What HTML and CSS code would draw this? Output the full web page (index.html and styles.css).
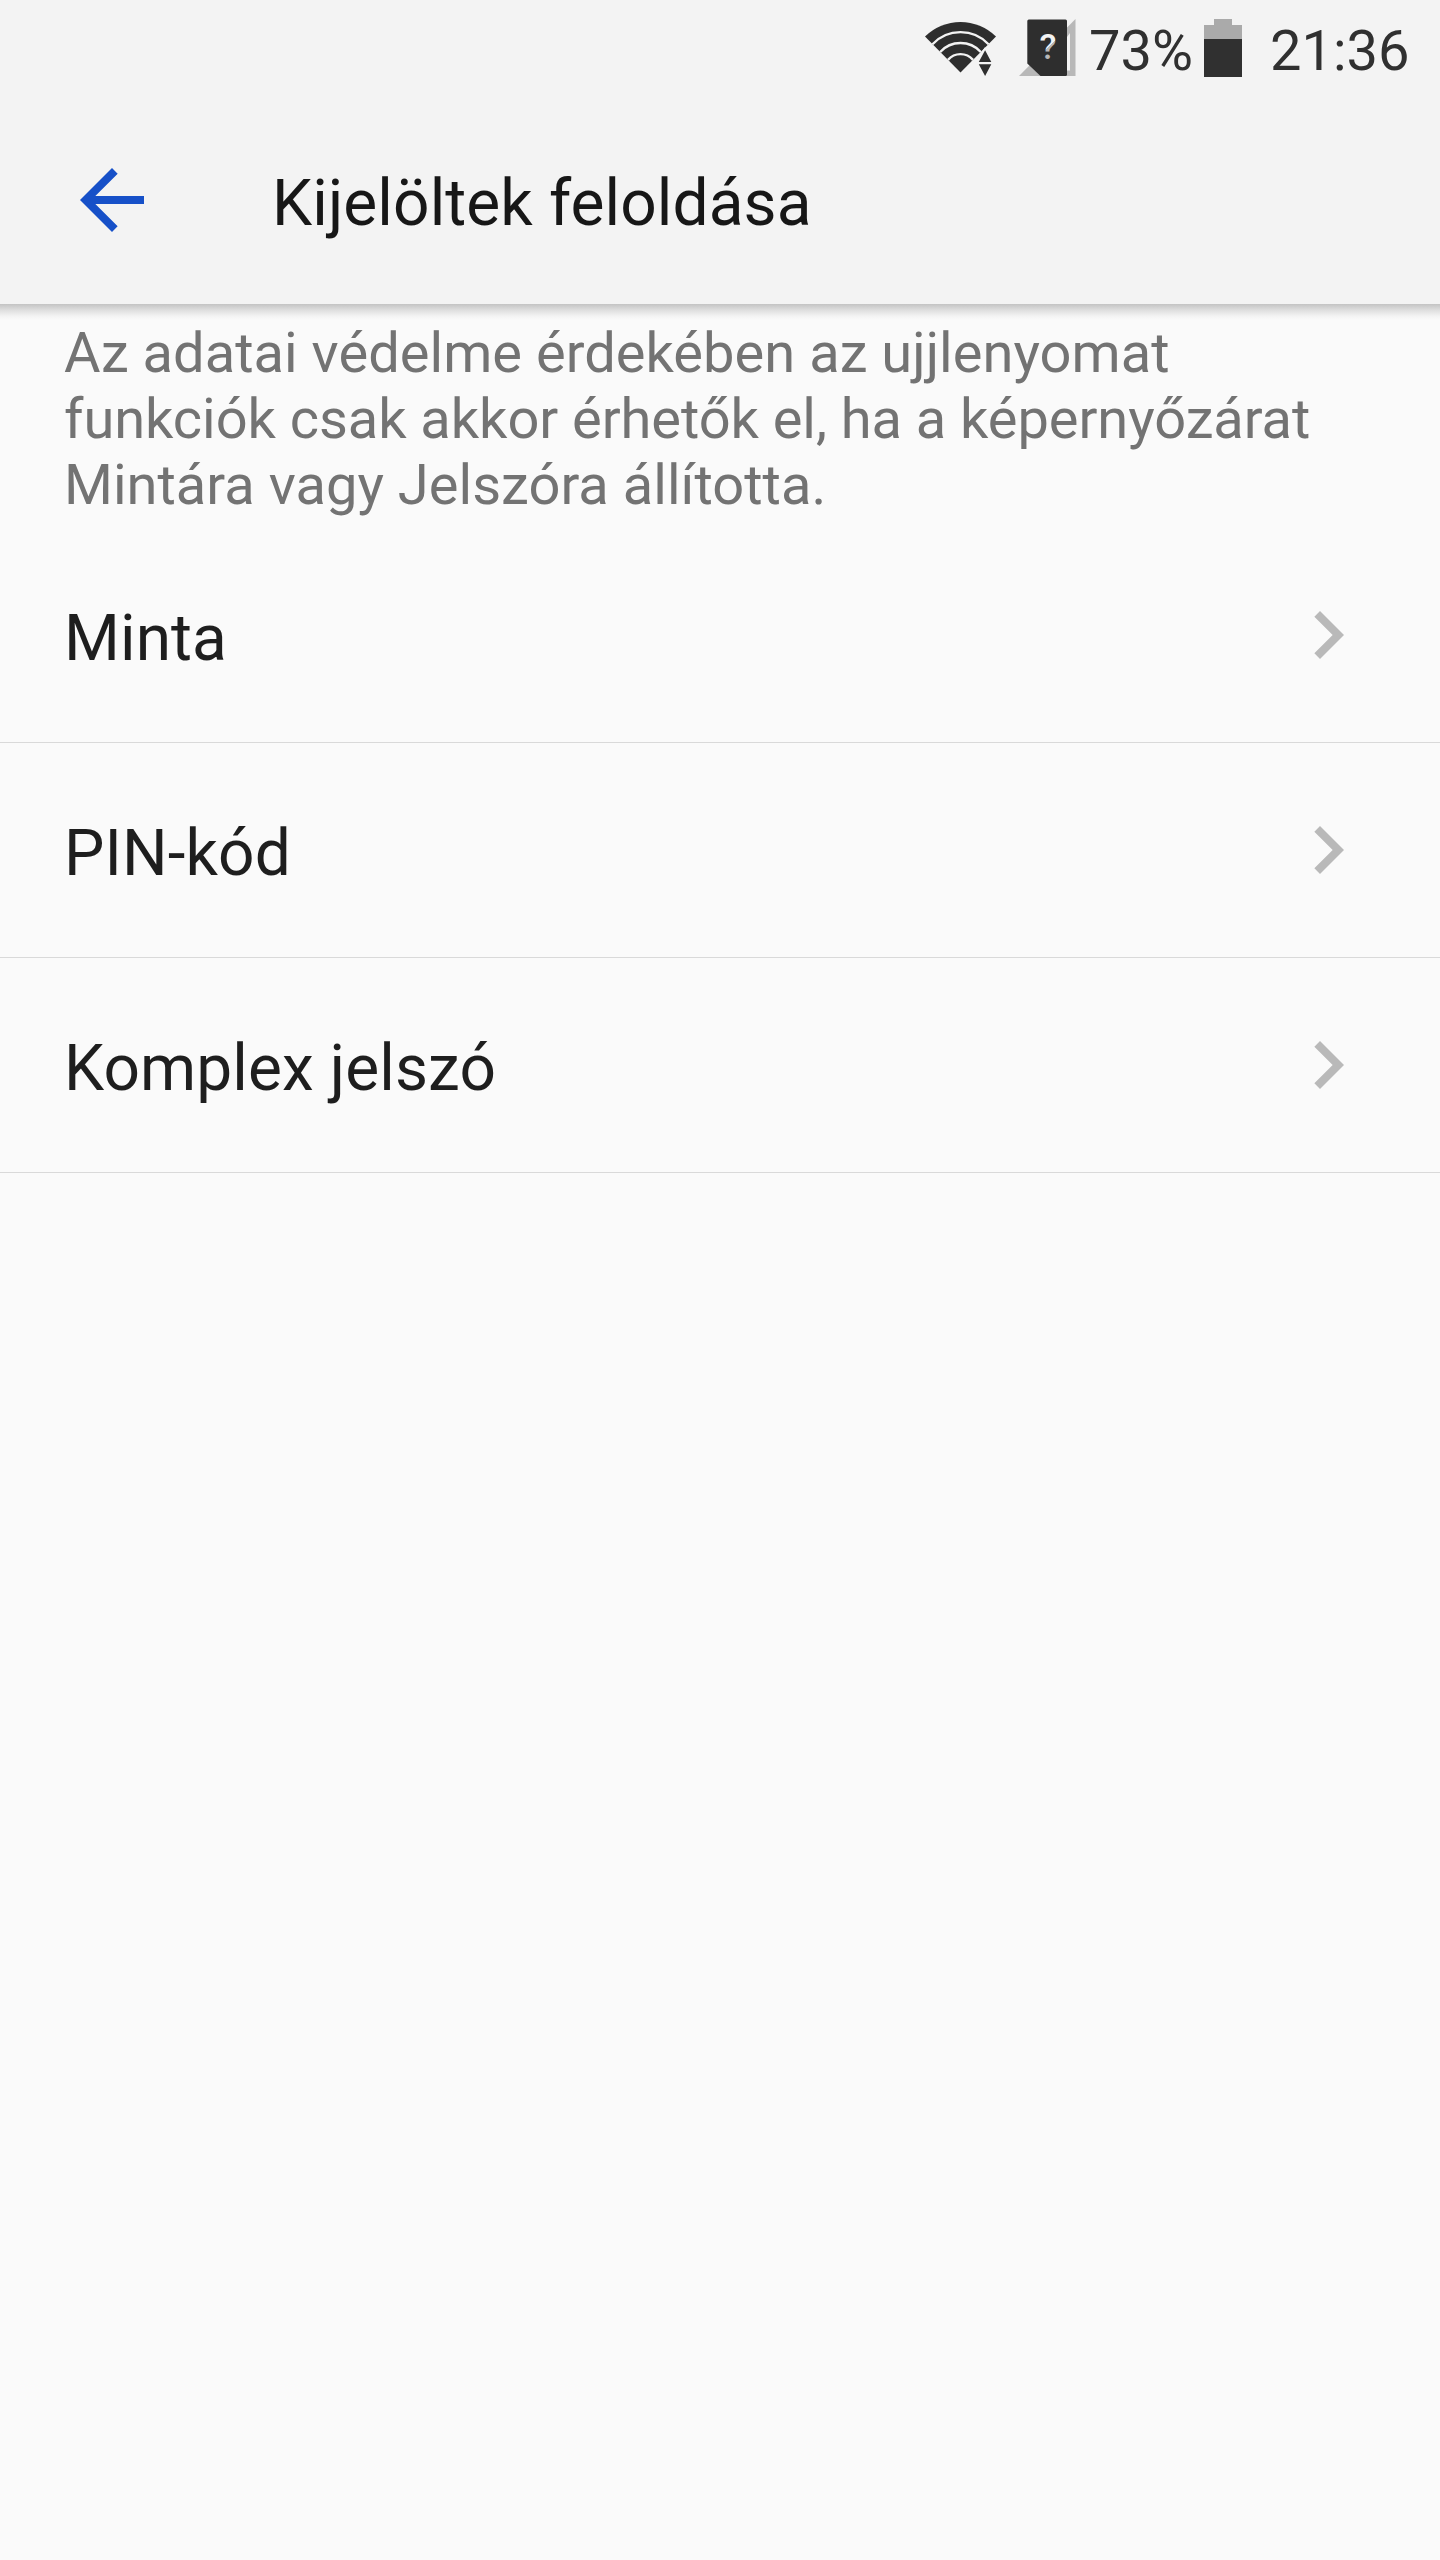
FILE: index.html
```html
<!DOCTYPE html>
<html lang="hu">
<head>
    <meta charset="UTF-8">
    <meta name="viewport" content="width=device-width, initial-scale=1.0">
    <title>Kijelöltek feloldása</title>
    <link rel="stylesheet" href="styles.css">
</head>
<body>
    <header class="header">
        <div class="status-bar">
            <svg class="icon-wifi" width="72" height="56" viewBox="0 0 72 56">
                <path d="M35.5 51.5L0 15.5A50.5 50.5 0 0 1 71 15.5Z" fill="#2e2e2e"/>
                <g fill="none" stroke="#f3f3f3" stroke-width="2.4">
                    <path d="M7.5 23.2A38.5 38.5 0 0 1 63.5 23.2"/>
                    <path d="M15.2 31A27.5 27.5 0 0 1 55.8 31"/>
                    <path d="M23 38.9A16.5 16.5 0 0 1 48 38.9"/>
                </g>
                <path d="M60.1 26L50 40.5V44L60.1 56L70 44V40.5Z" fill="#f3f3f3"/>
                <path d="M60.1 29.2L66.3 41H53.8ZM53.8 43.3H66.3L60.1 55Z" fill="#2e2e2e"/>
            </svg>
            <svg class="icon-sim" width="57" height="57" viewBox="0 0 57 57">
                <defs>
                    <linearGradient id="mark" gradientUnits="userSpaceOnUse" x1="0" y1="0" x2="57" y2="57">
                        <stop offset="0.5" stop-color="#f3f3f3"/>
                        <stop offset="0.5" stop-color="#b8b8b8"/>
                    </linearGradient>
                </defs>
                <path d="M56.5 0V57H0Z" fill="#b8b8b8"/>
                <path d="M48 18L51 14V51.5H48Z" fill="#f3f3f3"/>
                <path d="M9.8 .5H46.5Q48 .5 48 2V55.5Q48 57 46.5 57H21.5L8.3 44.5V2Q8.3 .5 9.8 .5Z" fill="#2e2e2e"/>
                <text x="29" y="40" class="sim-mark" text-anchor="middle" fill="url(#mark)">?</text>
            </svg>
            <span class="battery-text">73%</span>
            <svg class="icon-battery" width="38" height="58" viewBox="0 0 38 58">
                <path d="M10 0H28V6H38V20H0V6H10Z" fill="#aaa"/>
                <path d="M0 20H38V58H0Z" fill="#303030"/>
            </svg>
            <span class="clock">21:36</span>
        </div>
        <div class="app-bar">
            <svg class="back" width="96" height="96" viewBox="0 0 24 24">
                <path d="M20 11H7.83l5.59-5.59L12 4l-8 8 8 8 1.41-1.41L7.83 13H20v-2z"/>
            </svg>
            <h1>Kijelöltek feloldása</h1>
        </div>
    </header>

    <main>
        <p class="summary">Az adatai védelme érdekében az ujjlenyomat <span class="tight">funkciók csak akkor érhetők el, ha a képernyőzárat</span> Mintára vagy Jelszóra állította.</p>
        <ul class="list">
            <li>
                <span>Minta</span>
                <svg class="chevron" width="96" height="96" viewBox="0 0 24 24"><path d="M10 6L8.59 7.41 13.17 12l-4.58 4.59L10 18l6-6z"/></svg>
            </li>
            <li>
                <span>PIN-kód</span>
                <svg class="chevron" width="96" height="96" viewBox="0 0 24 24"><path d="M10 6L8.59 7.41 13.17 12l-4.58 4.59L10 18l6-6z"/></svg>
            </li>
            <li>
                <span>Komplex jelszó</span>
                <svg class="chevron" width="96" height="96" viewBox="0 0 24 24"><path d="M10 6L8.59 7.41 13.17 12l-4.58 4.59L10 18l6-6z"/></svg>
            </li>
        </ul>
    </main>
</body>
</html>
```
FILE: styles.css
```css
* {
    box-sizing: border-box;
}
body {
    margin: 0;
    min-height: 2560px;
    background-color: #fafafa;
    color: #1e1e1e;
    font-family: Roboto, sans-serif;
}
svg {
    display: block;
    flex-shrink: 0;
}
.header {
    position: relative;
    height: 304px;
    background-color: #f3f3f3;
}
/* shadow under the app bar */
.header::after {
    content: "";
    position: absolute;
    left: 0;
    right: 0;
    top: 100%;
    height: 16px;
    background: linear-gradient(#c3c3c3, #dedede 38%, #f3f3f3 75%, #fafafa);
}
.status-bar {
    display: flex;
    justify-content: flex-end;
    align-items: flex-start;
    height: 96px;
    padding-right: 31px;
    color: #303030;
    font-size: 56px;
    line-height: 66px;
}
.icon-wifi {
    margin: 21px 22px 0 0;
}
.icon-sim {
    margin: 19px 13px 0 0;
}
.sim-mark {
    font-size: 35px;
    font-weight: 500;
}
.battery-text {
    width: 104px;
    margin: 18px 11px 0 0;
}
.icon-battery {
    margin: 19px 28px 0 0;
}
.clock {
    width: 139px;
    margin-top: 18px;
}
.app-bar {
    display: flex;
    align-items: center;
    height: 208px;
    padding-left: 64px;
}
.back {
    fill: #1650c8;
}
h1 {
    margin: 7px 0 0 112px;
    color: #171717;
    font-size: 64px;
    font-weight: 400;
    line-height: 75px;
    letter-spacing: 0.1px;
}
.summary {
    margin: 0;
    padding: 16px 64px 10px;
    color: #737373;
    font-size: 56px;
    line-height: 66px;
    letter-spacing: 0.03px;
}
.summary .tight {
    letter-spacing: -0.06px;
}
.list {
    margin: 0;
    padding: 0;
    list-style: none;
}
.list li {
    display: flex;
    justify-content: space-between;
    align-items: center;
    height: 215px;
    padding: 0 64px;
    border-bottom: 1px solid #d9d9d9;
    font-size: 64px;
    line-height: 75px;
    letter-spacing: 0.1px;
}
.list span {
    padding-top: 7px;
}
.chevron {
    fill: #b9b9b9;
}
```
